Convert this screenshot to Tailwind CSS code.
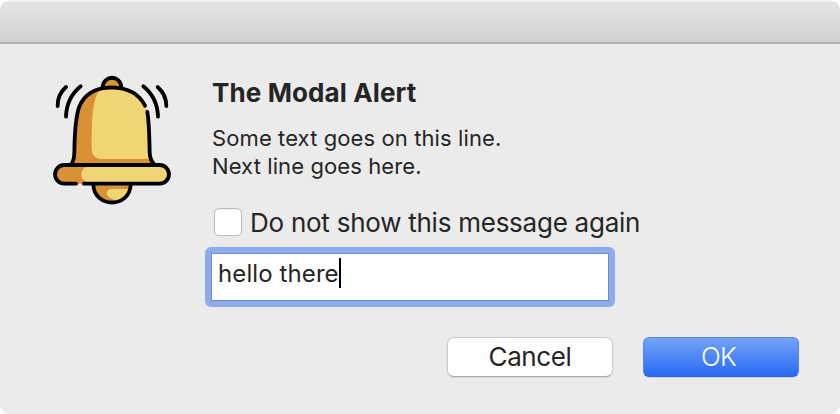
<!DOCTYPE html>
<html lang="en">
<head>
<meta charset="utf-8">
<title>The Modal Alert</title>
<script src="https://cdn.jsdelivr.net/npm/@tailwindcss/browser@4"></script>
</head>
<body class="bg-white">
<div role="dialog" class="w-[840px] h-[414px] overflow-hidden rounded-[10px] bg-[#ebebeb] flex flex-col font-['Inter',sans-serif] text-[#252525]">
  <header class="h-[44px] shrink-0 bg-linear-to-b from-[#e5e5e5] to-[#d1d1d1] border-t-2 border-t-[#f2f2f2] border-b-2 border-b-[#b1b1b1]"></header>
  <main class="flex pl-10 pt-[21px]">
    <svg class="w-[145px] h-[150px] shrink-0" viewBox="0 0 435 450" fill="none" stroke-linecap="round" stroke-linejoin="round">
      <path d="M188 67C190 30 242 30 244 67Z" fill="#d99136"/>
      <path d="M92 300Q103 288 103 262C104 218 104 166 117 127C132 88 165 68 215 67C267 68 302 92 317 127C328 160 328 218 329 262Q330 288 345 300Z" fill="#d99136"/>
      <path d="M184 70Q198 67 215 67C267 68 302 92 317 127C327 160 328 218 328 257Q329 273 333 282H187Q155 282 155 250C156 172 154 98 184 70Z" fill="#f1d474"/>
      <path d="M160 356C161 428 271 428 272 356Z" fill="#d99136"/>
      <path d="M272 372H214Q200 374 200 386Q203 399 229 406C250 403 267 390 272 372Z" fill="#f1d474"/>
      <rect x="45" y="300" width="342" height="56" rx="28" fill="#d99136"/>
      <path d="M142 305H359A23 23 0 0 1 359 351H142Q124 347 124 328Q124 309 142 305Z" fill="#f1d474"/>
      <g stroke="#000" stroke-width="11.5">
        <path d="M188 66C191 29 241 29 244 66"/>
        <path d="M92 300Q103 288 103 262C104 218 104 166 117 127C132 88 165 68 215 67C263 68 298 88 315 122M322 141C328 176 328 220 329 262Q330 288 345 300"/>
        <path d="M108 356H73A28 28 0 0 1 73 300H359A28 28 0 0 1 359 356H132"/>
        <path d="M160 360C164 430 268 430 272 360"/>
        <path d="M78 66Q52 89 53 123M122 64Q80 98 78 155M353 66Q379 89 379 123M310 64Q352 98 354 155"/>
      </g>
    </svg>
    <div class="pl-[27px] pt-[11px]">
      <h1 class="h-[34px] leading-[34px] text-[26px] font-bold tracking-[0.12px] whitespace-nowrap">The Modal Alert</h1>
      <p class="mt-[14px] text-[22px] leading-[28px] tracking-[0.1px] whitespace-nowrap">Some text goes on this line.<br>Next line goes here.</p>
      <label class="mt-[27px] ml-0.5 flex h-[30px] items-center whitespace-nowrap">
        <span class="size-7 rounded-[5px] bg-white border border-[#bdbdbd] shadow-[inset_0_1px_1px_#00000010]"></span>
        <span class="relative top-px ml-[8px] text-[26px] leading-[30px] tracking-[-0.25px]">Do not show this message again</span>
      </label>
      <div class="mt-[10px] -ml-[7px] w-[410px] h-[60px] rounded-[6px] bg-[#8eabec] p-[6px]">
        <div class="flex h-full border border-[#6d8ccc] bg-white pl-[6px] pt-[4px]">
          <span class="text-[24px] leading-[32px] tracking-[0.1px] whitespace-nowrap">hello there</span>
          <span class="w-[2px] h-[30px] bg-black"></span>
        </div>
      </div>
    </div>
  </main>
  <footer class="flex gap-[30px] pl-[447px] pt-[30px] text-[26px] leading-[39px]">
    <button class="w-[166px] h-[40px] rounded-[7px] bg-white border border-[#c9c9c9] border-b-[#ababab] shadow-[0_1px_1px_#00000018] tracking-[-0.4px] leading-[38px]">Cancel</button>
    <button class="w-[156px] h-[40px] rounded-[6px] bg-linear-to-b from-[#73a3f5] to-[#2768f6] border border-[#5189ee] border-b-[#2763e8] shadow-[0_1px_1px_#00000018] text-white font-light tracking-[-0.8px] leading-[38px] pr-[5px]">OK</button>
  </footer>
</div>
</body>
</html>
